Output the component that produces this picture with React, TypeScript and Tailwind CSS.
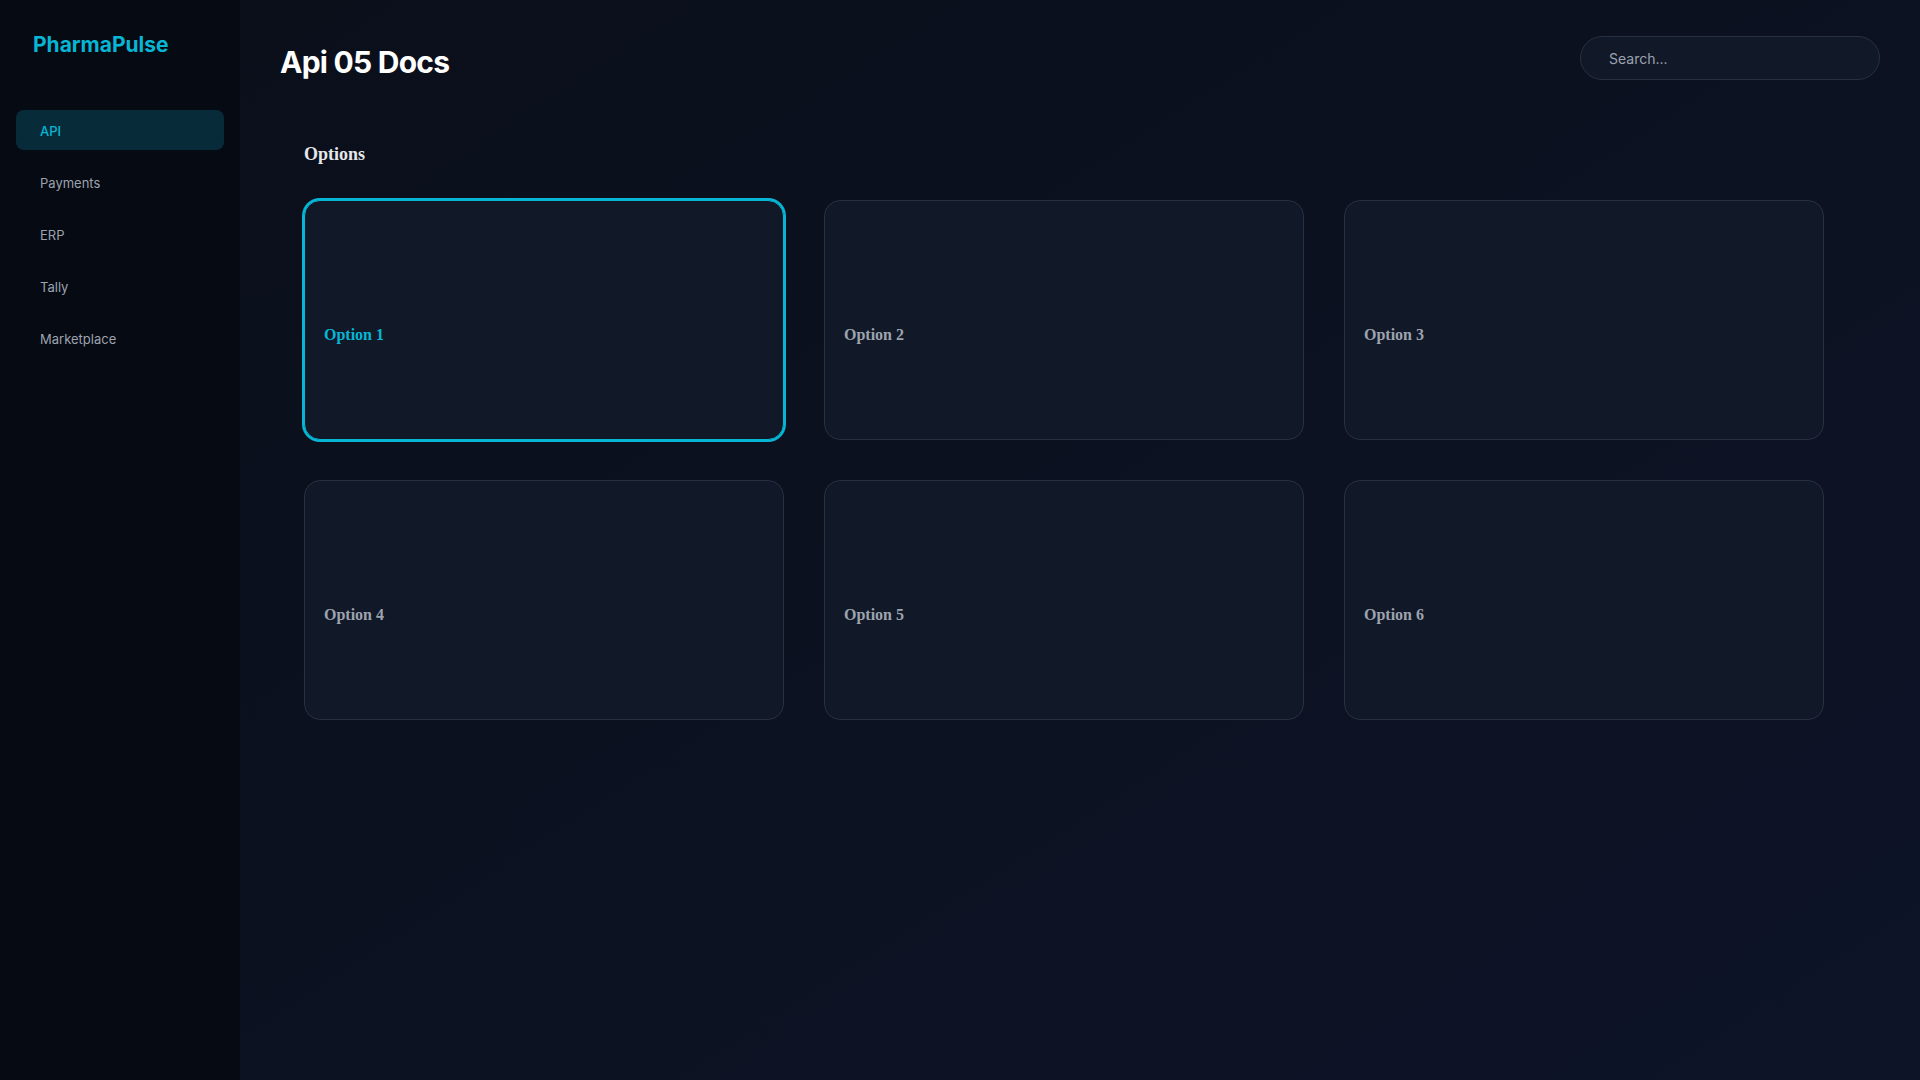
import React from "react";

const navItems = ["API", "Payments", "ERP", "Tally", "Marketplace"];
const options = ["Option 1", "Option 2", "Option 3", "Option 4", "Option 5", "Option 6"];

export default function App() {
  return (
    <div className="flex min-h-screen w-full font-['Inter',sans-serif]">
      <aside className="w-[240px] shrink-0 bg-[#060a12] px-4 pt-[31px]">
        <div className="px-[17px] text-[21px] font-bold leading-[28px] text-[#06b6d4]">PharmaPulse</div>
        <nav className="mt-[51px] flex flex-col gap-3">
          {navItems.map((item, i) => (
            <div
              key={item}
              className={
                i === 0
                  ? "flex h-10 items-center rounded-lg bg-[#082b3a] px-6 pt-[3px] text-[13px] font-medium text-[#06b6d4]"
                  : "flex h-10 items-center rounded-lg px-6 pt-[3px] text-[13px] text-[#9ca3af]"
              }
            >
              {item}
            </div>
          ))}
        </nav>
      </aside>
      <main className="min-h-screen flex-1 bg-linear-to-br from-[#0a0f1a] to-[#0e1428] px-10 pt-9">
        <header className="flex items-start justify-between">
          <h1 className="mt-2 text-[30px] font-bold leading-[36px] tracking-tight text-white">Api 05 Docs</h1>
          <input
            placeholder="Search..."
            className="h-11 w-[300px] rounded-full border border-[#273041] bg-[#111827] px-7 text-sm text-gray-200 placeholder:text-[#9ca3af] outline-none"
          />
        </header>
        <section className="mt-9 p-6">
          <h2 className="font-['Liberation_Serif',serif] text-lg font-bold leading-7 text-[#e5e7eb]">Options</h2>
          <div className="mt-8 grid grid-cols-[repeat(3,480px)] gap-10">
            {options.map((opt, i) => (
              <div
                key={opt}
                className={
                  i === 0
                    ? "flex h-[240px] items-center rounded-2xl border border-[#06b6d4] bg-[#111827] px-[19px] pt-[29px] ring-2 ring-[#06b6d4]"
                    : "flex h-[240px] items-center rounded-2xl border border-[#273041] bg-[#111827] px-[19px] pt-[29px]"
                }
              >
                <h3
                  className={
                    i === 0
                      ? "font-['Liberation_Serif',serif] text-base font-bold leading-6 text-[#06b6d4]"
                      : "font-['Liberation_Serif',serif] text-base font-bold leading-6 text-[#9ca3af]"
                  }
                >
                  {opt}
                </h3>
              </div>
            ))}
          </div>
        </section>
      </main>
    </div>
  );
}
